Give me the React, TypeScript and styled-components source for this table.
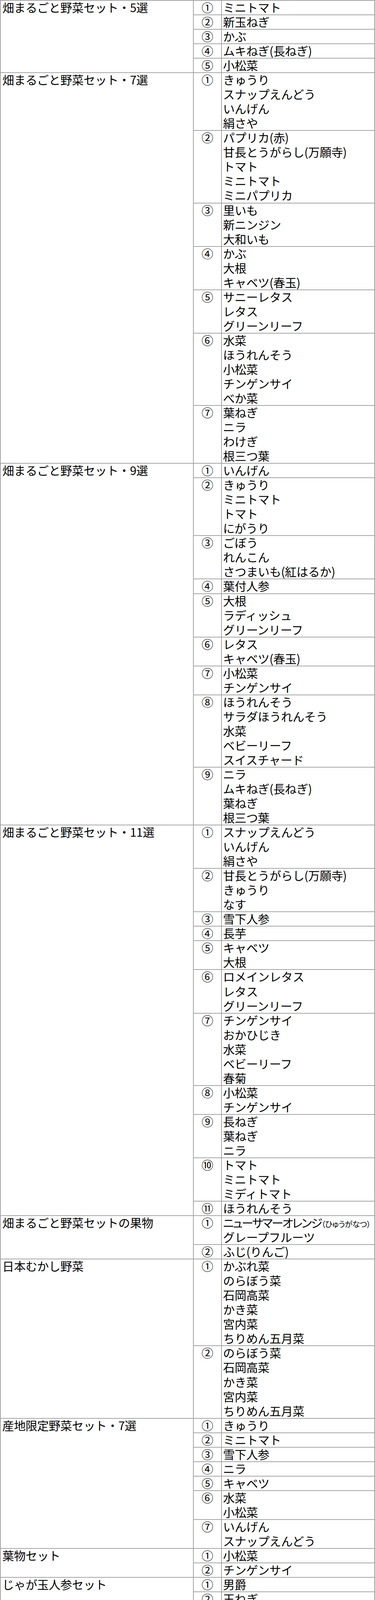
import React from 'react';
import styled, { createGlobalStyle } from 'styled-components';

const LINE = 37.04;
const RULE = '#a6a6a6';

const GlobalStyle = createGlobalStyle`
  html, body {
    margin: 0;
    padding: 0;
    background: #ffffff;
    overflow-x: hidden;
  }
  body {
    font-family: 'Noto Sans CJK JP', 'Noto Sans', sans-serif;
    color: #000;
  }
`;

const Table = styled.div`
  width: 960px;
  box-sizing: border-box;
  border-top: 2px solid ${RULE};
  border-left: 2px solid ${RULE};
  border-right: 2px solid ${RULE};
  font-size: 30px;
  letter-spacing: -0.3px;
`;

const Group = styled.div`
  display: flex;
  align-items: stretch;
`;

const NameCell = styled.div`
  width: 494px;
  flex: none;
  box-sizing: border-box;
  border-right: 2px solid ${RULE};
  border-bottom: 2px solid ${RULE};
  padding-left: 4px;
  white-space: nowrap;
`;

const SubList = styled.div`
  flex: 1;
  min-width: 0;
`;

const SubRow = styled.div<{ $lines: number }>`
  display: flex;
  box-sizing: border-box;
  height: ${p => p.$lines * LINE}px;
  border-bottom: 2px solid ${RULE};
`;

const NumCell = styled.div`
  width: 72px;
  flex: none;
  box-sizing: border-box;
  border-right: 2px solid ${RULE};
  text-align: center;
  letter-spacing: 0;
`;

const ItemsCell = styled.div`
  flex: 1;
  min-width: 0;
  padding-left: 3px;
  white-space: nowrap;
`;

/* text sits ~2px higher than the plain line box would put it */
const Lines = styled.div`
  margin-top: -2px;
  line-height: ${LINE}px;
`;

const Item = styled.div`
  height: ${LINE}px;
`;

const Tight = styled.span`
  font-feature-settings: 'palt' 1;
  letter-spacing: -2.5px;
`;

const Small = styled.span`
  font-size: 20px;
  letter-spacing: -0.5px;
`;

const circled = ['①', '②', '③', '④', '⑤', '⑥', '⑦', '⑧', '⑨', '⑩', '⑪'];

type Entry = { name: string; rows: React.ReactNode[][] };

const data: Entry[] = [
  {
    name: '畑まるごと野菜セット・5選',
    rows: [['ミニトマト'], ['新玉ねぎ'], ['かぶ'], ['ムキねぎ(長ねぎ)'], ['小松菜']],
  },
  {
    name: '畑まるごと野菜セット・7選',
    rows: [
      ['きゅうり', 'スナップえんどう', 'いんげん', '絹さや'],
      ['パプリカ(赤)', '甘長とうがらし(万願寺)', 'トマト', 'ミニトマト', 'ミニパプリカ'],
      ['里いも', '新ニンジン', '大和いも'],
      ['かぶ', '大根', 'キャベツ(春玉)'],
      ['サニーレタス', 'レタス', 'グリーンリーフ'],
      ['水菜', 'ほうれんそう', '小松菜', 'チンゲンサイ', 'べか菜'],
      ['葉ねぎ', 'ニラ', 'わけぎ', '根三つ葉'],
    ],
  },
  {
    name: '畑まるごと野菜セット・9選',
    rows: [
      ['いんげん'],
      ['きゅうり', 'ミニトマト', 'トマト', 'にがうり'],
      ['ごぼう', 'れんこん', 'さつまいも(紅はるか)'],
      ['葉付人参'],
      ['大根', 'ラディッシュ', 'グリーンリーフ'],
      ['レタス', 'キャベツ(春玉)'],
      ['小松菜', 'チンゲンサイ'],
      ['ほうれんそう', 'サラダほうれんそう', '水菜', 'ベビーリーフ', 'スイスチャード'],
      ['ニラ', 'ムキねぎ(長ねぎ)', '葉ねぎ', '根三つ葉'],
    ],
  },
  {
    name: '畑まるごと野菜セット・11選',
    rows: [
      ['スナップえんどう', 'いんげん', '絹さや'],
      ['甘長とうがらし(万願寺)', 'きゅうり', 'なす'],
      ['雪下人参'],
      ['長芋'],
      ['キャベツ', '大根'],
      ['ロメインレタス', 'レタス', 'グリーンリーフ'],
      ['チンゲンサイ', 'おかひじき', '水菜', 'ベビーリーフ', '春菊'],
      ['小松菜', 'チンゲンサイ'],
      ['長ねぎ', '葉ねぎ', 'ニラ'],
      ['トマト', 'ミニトマト', 'ミディトマト'],
      ['ほうれんそう'],
    ],
  },
  {
    name: '畑まるごと野菜セットの果物',
    rows: [
      [
        <Tight>
          ニューサマーオレンジ<Small>（ひゅうがなつ）</Small>
        </Tight>,
        'グレープフルーツ',
      ],
      ['ふじ(りんご)'],
    ],
  },
  {
    name: '日本むかし野菜',
    rows: [
      ['かぶれ菜', 'のらぼう菜', '石岡高菜', 'かき菜', '宮内菜', 'ちりめん五月菜'],
      ['のらぼう菜', '石岡高菜', 'かき菜', '宮内菜', 'ちりめん五月菜'],
    ],
  },
  {
    name: '産地限定野菜セット・7選',
    rows: [
      ['きゅうり'],
      ['ミニトマト'],
      ['雪下人参'],
      ['ニラ'],
      ['キャベツ'],
      ['水菜', '小松菜'],
      ['いんげん', 'スナップえんどう'],
    ],
  },
  {
    name: '葉物セット',
    rows: [['小松菜'], ['チンゲンサイ']],
  },
  {
    name: 'じゃが玉人参セット',
    rows: [['男爵'], ['玉ねぎ'], ['ニンジン']],
  },
  {
    name: 'みのりちゃん',
    rows: [
      ['ふじ(りんご)', 'キウイフルーツ', 'パイナップル(ピーチ)'],
      ['黄金柑', '甘夏', 'ぶんたん'],
    ],
  },
  {
    name: '果物セット',
    rows: [['黄金柑'], ['ふじ(りんご)']],
  },
];

export default function App() {
  return (
    <>
      <GlobalStyle />
      <Table>
        {data.map(group => (
          <Group key={group.name}>
            <NameCell>
              <Lines>{group.name}</Lines>
            </NameCell>
            <SubList>
              {group.rows.map((items, i) => (
                <SubRow key={i} $lines={items.length}>
                  <NumCell>
                    <Lines>{circled[i]}</Lines>
                  </NumCell>
                  <ItemsCell>
                    <Lines>
                      {items.map((item, j) => (
                        <Item key={j}>{item}</Item>
                      ))}
                    </Lines>
                  </ItemsCell>
                </SubRow>
              ))}
            </SubList>
          </Group>
        ))}
      </Table>
    </>
  );
}
